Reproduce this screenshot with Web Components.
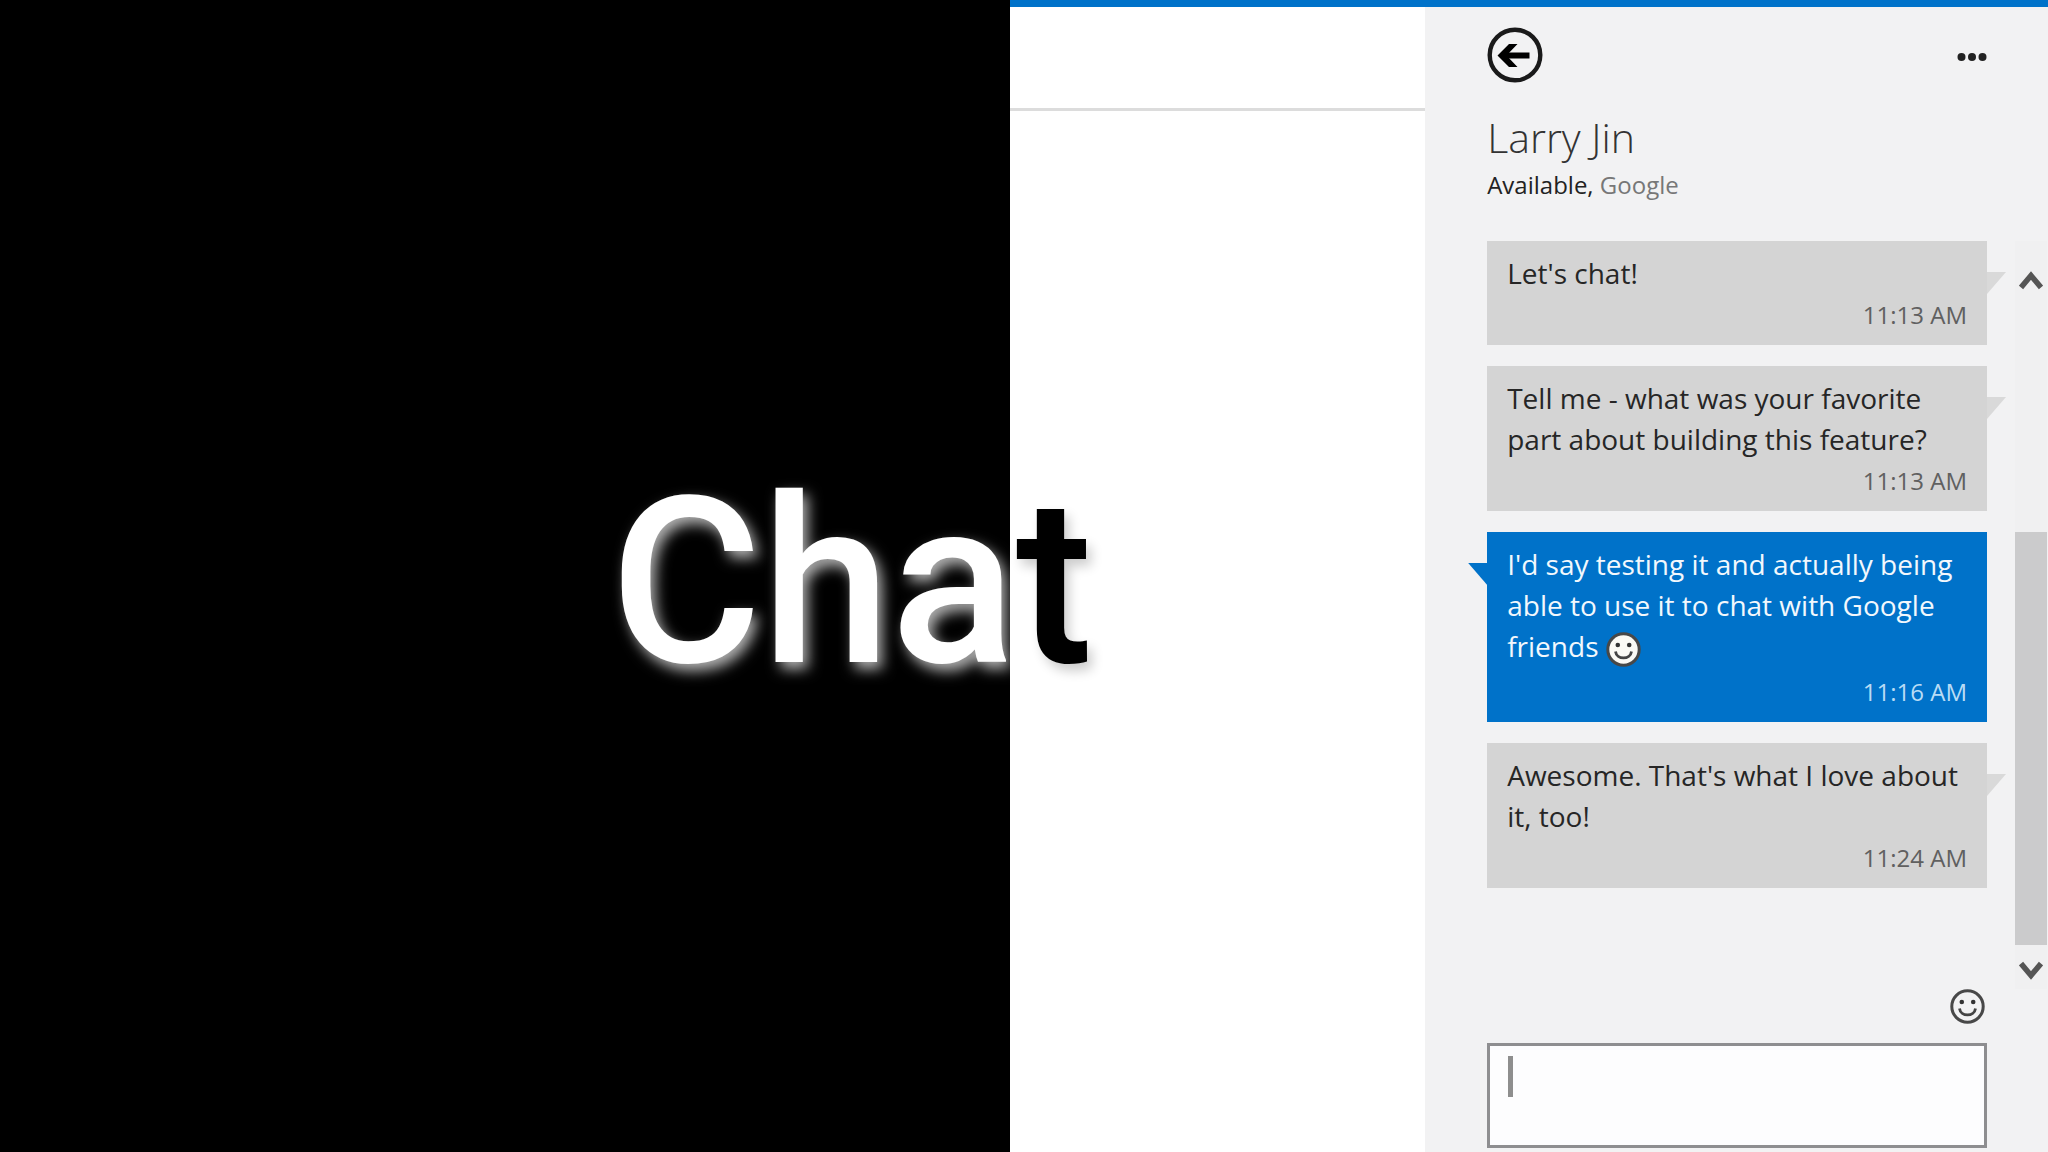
<!DOCTYPE html>
<html lang="en">
<head>
<meta charset="utf-8">
<title>Chat</title>
<style>
  body {
    margin: 0;
    font-family: "Open Sans", "Noto Sans", sans-serif;
  }
</style>
</head>
<body>
<chat-stage>
  <chat-title slot="title"></chat-title>
  <chat-panel name="Larry Jin" status="Available" network="Google">
    <chat-message time="11:13 AM">Let's chat!</chat-message>
    <chat-message time="11:13 AM">Tell me - what was your favorite part about building this feature?</chat-message>
    <chat-message time="11:16 AM" own>I'd say testing it and actually being able to use it to chat with Google friends <smile-icon filled></smile-icon></chat-message>
    <chat-message time="11:24 AM">Awesome. That's what I love about it, too!</chat-message>
  </chat-panel>
</chat-stage>

<script>
// Small helper: every element here is a template cloned into an open root
class BaseElement extends HTMLElement {
  constructor() {
    super();
    const template = document.createElement("template");
    template.innerHTML = this.constructor.html.trim();
    this.attachShadow({mode: "open"})
      .appendChild(template.content.cloneNode(true));
  }

  fill(id, attribute) {
    this.shadowRoot.getElementById(id).textContent = this.getAttribute(attribute);
  }
}

class Stage extends BaseElement {
  static html = `
<style>
  :host {
    display: grid;
    grid-template-columns: 1010fr 1038fr;
    min-height: 100vh;
    position: relative;
    overflow: hidden;
  }
  .dark {
    background: black;
  }
  .app {
    display: grid;
    grid-template-columns: 2fr 3fr;
    border-top: 7px solid #0072c9;
    background: white;
  }
  .bar {
    height: 101px;
    border-bottom: 3px solid #dcdcdc;
  }
</style>
<div class="dark"></div>
<div class="app">
  <div><div class="bar"></div></div>
  <slot></slot>
</div>
<slot name="title"></slot>
`;
}

class Title extends BaseElement {
  // Lies over the seam between the dark and the light half
  static html = `
<style>
  :host {
    position: absolute;
    top: 50%;
    left: 29.8%;
    transform: translateY(-50%);
  }
  h1 {
    margin: 0;
    padding-top: 14px;
    font: 500 232px/280px Roboto, sans-serif;
    white-space: nowrap;
    color: white;
    text-shadow: 5px 7px 14px rgba(255, 255, 255, 0.7);
  }
  span {
    color: black;
    text-shadow: 5px 7px 12px rgba(0, 0, 0, 0.2);
  }
</style>
<h1>Cha<span>t</span></h1>
`;
}

class Smile extends BaseElement {
  static html = `
<style>
  :host {
    display: inline-block;
    width: 35px;
    height: 35px;
    vertical-align: middle;
    --face: none;
  }
  :host([filled]) {
    --face: #fbfaf5;
  }
  svg {
    display: block;
  }
</style>
<svg viewBox="0 0 35 35" width="35" height="35" aria-hidden="true">
  <circle cx="17.5" cy="17.5" r="15.7" fill="var(--face)" stroke="#484848" stroke-width="3"/>
  <circle cx="11.8" cy="13" r="2.3" fill="#333"/>
  <circle cx="23.2" cy="13" r="2.3" fill="#333"/>
  <path d="M9.5 19.5c1.2 8.6 14.8 8.6 16 0" fill="none" stroke="#444" stroke-width="2.8"/>
</svg>
`;
}

class Message extends BaseElement {
  static html = `
<style>
  :host {
    display: block;
    position: relative;
    padding: 12px 20px 10px;
    background: #d4d4d4;
    color: #262626;
    font-size: 28px;
    line-height: 41px;
  }
  :host([own]) {
    background: #0072c9;
    color: #f2f8fd;
  }
  :host::after {
    content: "";
    position: absolute;
    top: 31px;
    left: 100%;
    width: 19px;
    height: 22px;
    background: #d9d9d9;
    clip-path: polygon(0 0, 100% 0, 0 100%);
  }
  :host([own])::after {
    left: auto;
    right: 100%;
    background: #0072c9;
    clip-path: polygon(0 0, 100% 0, 100% 100%);
  }
  p {
    margin: 0;
  }
  time {
    display: block;
    text-align: right;
    font-size: 24px;
    color: #606060;
  }
  :host([own]) time {
    margin-top: 4px;
    color: #b9dcf5;
  }
</style>
<p><slot></slot></p>
<time id="time"></time>
`;

  connectedCallback() {
    this.fill("time", "time");
  }
}

class Scrollbar extends BaseElement {
  static html = `
<style>
  :host {
    display: flex;
    flex-direction: column;
    background: #f0f0f1;
  }
  button {
    flex: none;
    display: grid;
    place-items: center;
    height: 78px;
    padding: 0;
    border: 0;
    background: none;
  }
  .down {
    height: 44px;
    padding-top: 8px;
  }
  .track {
    flex: 1;
    display: flex;
    flex-direction: column;
    justify-content: flex-end;
  }
  .thumb {
    height: 66%;
    background: #cbcbcc;
  }
</style>
<button aria-label="Scroll up">
  <svg width="24" height="20" viewBox="0 0 24 20"><path d="M2 17.5 12 5.5l10 12" fill="none" stroke="#555" stroke-width="5.5"/></svg>
</button>
<div class="track"><div class="thumb"></div></div>
<button class="down" aria-label="Scroll down">
  <svg width="24" height="20" viewBox="0 0 24 20"><path d="M2 2.5l10 12 10-12" fill="none" stroke="#555" stroke-width="5.5"/></svg>
</button>
`;
}

class Panel extends BaseElement {
  static html = `
<style>
  :host {
    display: flex;
    flex-direction: column;
    background: #f2f2f3;
  }
  header, footer {
    padding: 0 61px 0 62px;
  }
  nav {
    display: flex;
    justify-content: space-between;
    align-items: center;
    padding-top: 20px;
  }
  button {
    display: block;
    padding: 0;
    border: 0;
    background: none;
  }
  svg {
    display: block;
  }
  h2 {
    margin: 24px 0 0;
    font-size: 41px;
    line-height: 60px;
    font-weight: 300;
    color: #333;
  }
  .status {
    margin: 0;
    font-size: 24px;
    line-height: 36px;
    color: #777;
  }
  .status b {
    font-weight: 400;
    color: #222;
  }
  .middle {
    flex: 1;
    display: flex;
    justify-content: space-between;
    gap: 28px;
    padding: 38px 1px 0 62px;
  }
  .list {
    flex: 1;
    display: flex;
    flex-direction: column;
    gap: 21px;
  }
  chat-scrollbar {
    width: 32px;
  }
  footer {
    padding-bottom: 4px;
  }
  .tools {
    display: flex;
    justify-content: flex-end;
    padding: 0 2px 19px 0;
  }
  .box {
    position: relative;
  }
  textarea {
    display: block;
    box-sizing: border-box;
    width: 100%;
    height: 105px;
    padding: 10px 20px;
    border: 3px solid #8e8e90;
    border-radius: 0;
    background: #fdfdfe;
    font: 28px/41px "Open Sans", sans-serif;
    resize: none;
    outline: none;
  }
  .caret {
    position: absolute;
    top: 13px;
    left: 21px;
    width: 5px;
    height: 41px;
    background: #8e8e8e;
  }
</style>
<header>
  <nav>
    <button aria-label="Back">
      <svg width="56" height="56" viewBox="0 0 56 56">
        <circle cx="28" cy="28" r="25.3" fill="none" stroke="#1a1a1a" stroke-width="4.4"/>
        <path d="M42.5 28.5H16" fill="none" stroke="#000" stroke-width="6"/>
        <path d="M10.500 28.500L22 17h8.500L19.500 28.500 30.500 40H22z"/>
      </svg>
    </button>
    <button aria-label="More">
      <svg width="30" height="14" viewBox="0 0 30 14" fill="#222">
        <circle cx="4.500" cy="9" r="4"/><circle cx="15" cy="9" r="4"/><circle cx="25.500" cy="9" r="4"/>
      </svg>
    </button>
  </nav>
  <h2 id="name"></h2>
  <p class="status"><b><span id="status"></span>,</b> <span id="network"></span></p>
</header>
<div class="middle">
  <div class="list"><slot></slot></div>
  <chat-scrollbar></chat-scrollbar>
</div>
<footer>
  <div class="tools"><button aria-label="Insert emoticon"><smile-icon></smile-icon></button></div>
  <div class="box">
    <textarea aria-label="Message"></textarea>
    <span class="caret"></span>
  </div>
</footer>
`;

  connectedCallback() {
    this.fill("name", "name");
    this.fill("status", "status");
    this.fill("network", "network");
  }
}

customElements.define("chat-stage", Stage);
customElements.define("chat-title", Title);
customElements.define("smile-icon", Smile);
customElements.define("chat-message", Message);
customElements.define("chat-scrollbar", Scrollbar);
customElements.define("chat-panel", Panel);
</script>
</body>
</html>
